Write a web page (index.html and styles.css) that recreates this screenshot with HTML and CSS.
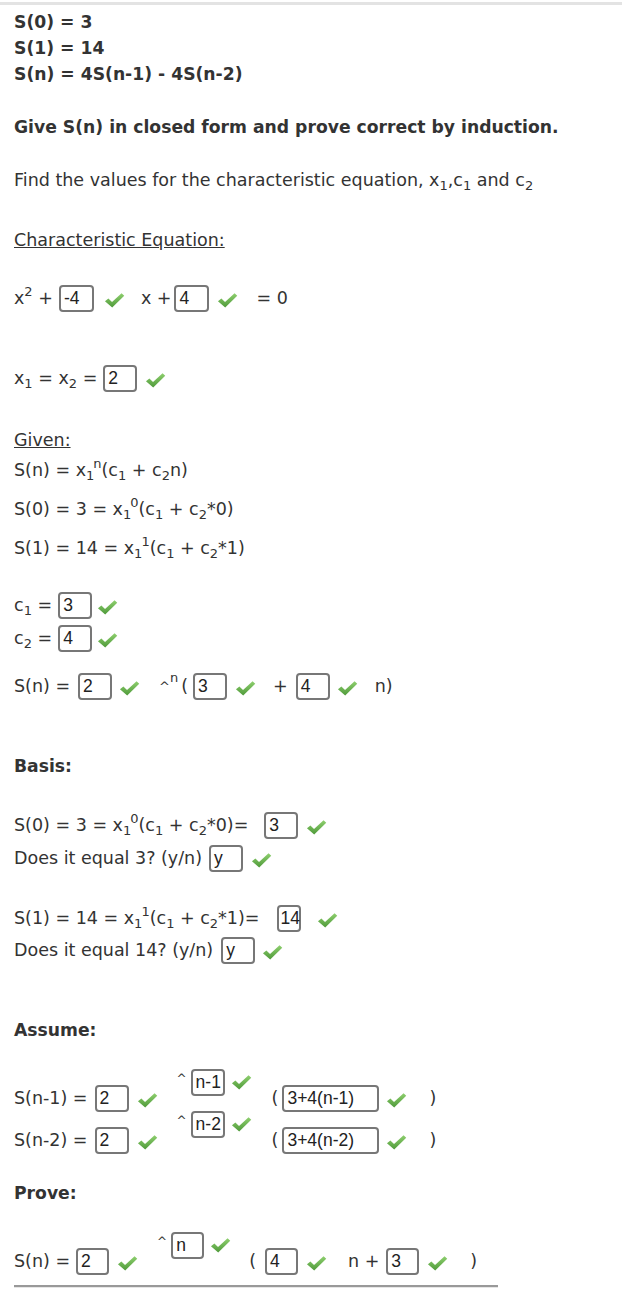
FILE: index.html
```html
<!DOCTYPE html>
<html>
<head>
<meta charset="utf-8">
<link rel="stylesheet" href="styles.css">
</head>
<body>
<svg width="0" height="0" class="defs">
  <defs>
    <linearGradient id="gck" x1="0" y1="0" x2="0" y2="1">
      <stop offset="0" stop-color="#8fd06f"/>
      <stop offset="1" stop-color="#4f9a3a"/>
    </linearGradient>
    <symbol id="ck" viewBox="0 0 22 17">
      <path d="M1 9.4 L4.6 6.4 L8.4 10 L18.4 0.8 L21.2 3.6 L8.6 15.8 Z" fill="url(#gck)"/>
    </symbol>
  </defs>
</svg>
<div class="topline"></div>
<div class="page">
  <div class="line b">S(0) = 3</div>
  <div class="line b">S(1) = 14</div>
  <div class="line b">S(n) = 4S(n-1) - 4S(n-2)</div>

  <div class="line b g27">Give S(n) in closed form and prove correct by induction.</div>
  <div class="line g27">Find the values for the characteristic equation, x<sub>1</sub>,c<sub>1</sub> and c<sub>2</sub></div>

  <div class="line u g34">Characteristic Equation:</div>

  <div class="row g31">
    <span>x<sup>2</sup> +</span>
    <span class="box w35 ml6">-4</span><svg class="ok ml10"><use href="#ck"/></svg>
    <span class="ml16">x +</span>
    <span class="box w35 ml3">4</span><svg class="ok ml8"><use href="#ck"/></svg>
    <span class="ml18">= 0</span>
  </div>

  <div class="row g52">
    <span>x<sub>1</sub> = x<sub>2</sub> =</span>
    <span class="box w34 ml6">2</span><svg class="ok ml8"><use href="#ck"/></svg>
  </div>

  <div class="line u g35">Given:</div>
  <div class="line g4">S(n) = x<sub>1</sub><sup class="nx">n</sup>(c<sub>1</sub> + c<sub>2</sub>n)</div>
  <div class="line g13">S(0) = 3 = x<sub>1</sub><sup class="nx">0</sup>(c<sub>1</sub> + c<sub>2</sub>*0)</div>
  <div class="line g13">S(1) = 14 = x<sub>1</sub><sup class="nx">1</sup>(c<sub>1</sub> + c<sub>2</sub>*1)</div>

  <div class="row g30">
    <span>c<sub>1</sub> =</span>
    <span class="box w34 ml6">3</span><svg class="ok ml5"><use href="#ck"/></svg>
  </div>
  <div class="row g5">
    <span>c<sub>2</sub> =</span>
    <span class="box w34 ml6">4</span><svg class="ok ml5"><use href="#ck"/></svg>
  </div>
  <div class="row g20">
    <span>S(n) =</span>
    <span class="box w34 ml8">2</span><svg class="ok ml7"><use href="#ck"/></svg>
    <span class="caret ml19">^<sup>n</sup></span><span class="ml3">(</span>
    <span class="box w34 ml5">3</span><svg class="ok ml8"><use href="#ck"/></svg>
    <span class="ml17">+</span>
    <span class="box w34 ml8">4</span><svg class="ok ml7"><use href="#ck"/></svg>
    <span class="ml17">n)</span>
  </div>

  <div class="line b g53">Basis:</div>

  <div class="row g32">
    <span>S(0) = 3 = x<sub>1</sub><sup class="nx">0</sup>(c<sub>1</sub> + c<sub>2</sub>*0)=</span>
    <span class="box w34 ml16">3</span><svg class="ok ml8"><use href="#ck"/></svg>
  </div>
  <div class="row g5">
    <span>Does it equal 3? (y/n)</span>
    <span class="box w34 ml7">y</span><svg class="ok ml8"><use href="#ck"/></svg>
  </div>
  <div class="row g32">
    <span>S(1) = 14 = x<sub>1</sub><sup class="nx">1</sup>(c<sub>1</sub> + c<sub>2</sub>*1)=</span>
    <span class="box w24 ml18">14</span><svg class="ok ml16"><use href="#ck"/></svg>
  </div>
  <div class="row g4">
    <span>Does it equal 14? (y/n)</span>
    <span class="box w34 ml8">y</span><svg class="ok ml7"><use href="#ck"/></svg>
  </div>

  <div class="line b g53">Assume:</div>

  <div class="row g41">
    <span>S(n-1) =</span>
    <span class="box w34 ml7">2</span><svg class="ok ml8"><use href="#ck"/></svg>
    <span class="sup ml19"><span class="hat">^</span><span class="box w34">n-1</span><svg class="ok ml6 lift"><use href="#ck"/></svg></span>
    <span class="ml20">(</span>
    <span class="box w97 ml4">3+4(n-1)</span><svg class="ok ml7"><use href="#ck"/></svg>
    <span class="ml22">)</span>
  </div>
  <div class="row g14">
    <span>S(n-2) =</span>
    <span class="box w34 ml7">2</span><svg class="ok ml8"><use href="#ck"/></svg>
    <span class="sup ml19"><span class="hat">^</span><span class="box w34">n-2</span><svg class="ok ml6 lift"><use href="#ck"/></svg></span>
    <span class="ml20">(</span>
    <span class="box w97 ml4">3+4(n-2)</span><svg class="ok ml7"><use href="#ck"/></svg>
    <span class="ml22">)</span>
  </div>

  <div class="line b g26">Prove:</div>

  <div class="row g41">
    <span>S(n) =</span>
    <span class="box w33 ml6">2</span><svg class="ok ml8"><use href="#ck"/></svg>
    <span class="sup ml19"><span class="hat">^</span><span class="box w33">n</span><svg class="ok ml6 lift"><use href="#ck"/></svg></span>
    <span class="ml18">(</span>
    <span class="box w33 ml9">4</span><svg class="ok ml8"><use href="#ck"/></svg>
    <span class="ml21">n +</span>
    <span class="box w33 ml7">3</span><svg class="ok ml8"><use href="#ck"/></svg>
    <span class="ml22">)</span>
  </div>

  <div class="rule"></div>
</div>
</body>
</html>
```
FILE: styles.css
```css
html, body {
  margin: 0;
  padding: 0;
  background: #fff;
}
body {
  font-family: "DejaVu Sans", Verdana, sans-serif;
  font-size: 17.5px;
  color: #333;
}
.defs {
  position: absolute;
  width: 0;
  height: 0;
}
.topline {
  margin-top: 2px;
  height: 3px;
  background: #e3e3e3;
}
.page {
  padding: 4px 0 0 14px;
}
.line {
  line-height: 26px;
  height: 26px;
  white-space: nowrap;
}
.b { font-weight: bold; font-size: 17.2px; }
.u { text-decoration: underline; }
sub, sup {
  font-size: 13px;
  line-height: 0;
}
sub { vertical-align: -4px; }
sup { vertical-align: 8px; }
sup.nx { margin-left: -1px; }

.row {
  display: flex;
  align-items: center;
  height: 28px;
  white-space: nowrap;
}
.box {
  box-sizing: border-box;
  display: inline-flex;
  align-items: center;
  height: 27px;
  padding: 0 0 0 3px;
  border: 2px solid #777;
  border-radius: 4px;
  font-family: "Liberation Sans", Arial, sans-serif;
  font-size: 17.5px;
  color: #222;
  background: #fff;
  flex: none;
}
.w24 { width: 24px; padding-left: 1px; }
.w33 { width: 33px; }
.w34 { width: 34px; }
.w35 { width: 35px; }
.w97 { width: 97px; }
.ok {
  width: 21px;
  height: 17px;
  margin-top: 5px;
  flex: none;
}
.ok.lift { margin-top: 1px; }
.ml3 { margin-left: 3px; }
.ml4 { margin-left: 4px; }
.ml5 { margin-left: 5px; }
.ml6 { margin-left: 6px; }
.ml7 { margin-left: 7px; }
.ml8 { margin-left: 8px; }
.ml9 { margin-left: 9px; }
.ml10 { margin-left: 10px; }
.ml16 { margin-left: 16px; }
.ml17 { margin-left: 17px; }
.ml18 { margin-left: 18px; }
.ml19 { margin-left: 19px; }
.ml20 { margin-left: 20px; }
.ml21 { margin-left: 21px; }
.ml22 { margin-left: 22px; }
.caret sup { vertical-align: 9px; font-size: 13px; }
.caret { font-size: 13px; }
.sup {
  display: flex;
  align-items: center;
  margin-bottom: 32px;
}
.hat {
  font-size: 12px;
  margin-right: 4px;
  margin-top: -6px;
}

.g4 { margin-top: 4px; }
.g5 { margin-top: 5px; }
.g13 { margin-top: 13px; }
.g14 { margin-top: 14px; }
.g20 { margin-top: 20px; }
.g26 { margin-top: 26px; }
.g27 { margin-top: 27px; }
.g30 { margin-top: 30px; }
.g31 { margin-top: 31px; }
.g32 { margin-top: 32px; }
.g34 { margin-top: 34px; }
.g35 { margin-top: 35px; }
.g41 { margin-top: 41px; }
.g52 { margin-top: 52px; }
.g53 { margin-top: 53px; }

.rule {
  margin-top: 10px;
  width: 484px;
  height: 2px;
  background: #999;
  border-bottom: 1px solid #e6e6e6;
}
```
